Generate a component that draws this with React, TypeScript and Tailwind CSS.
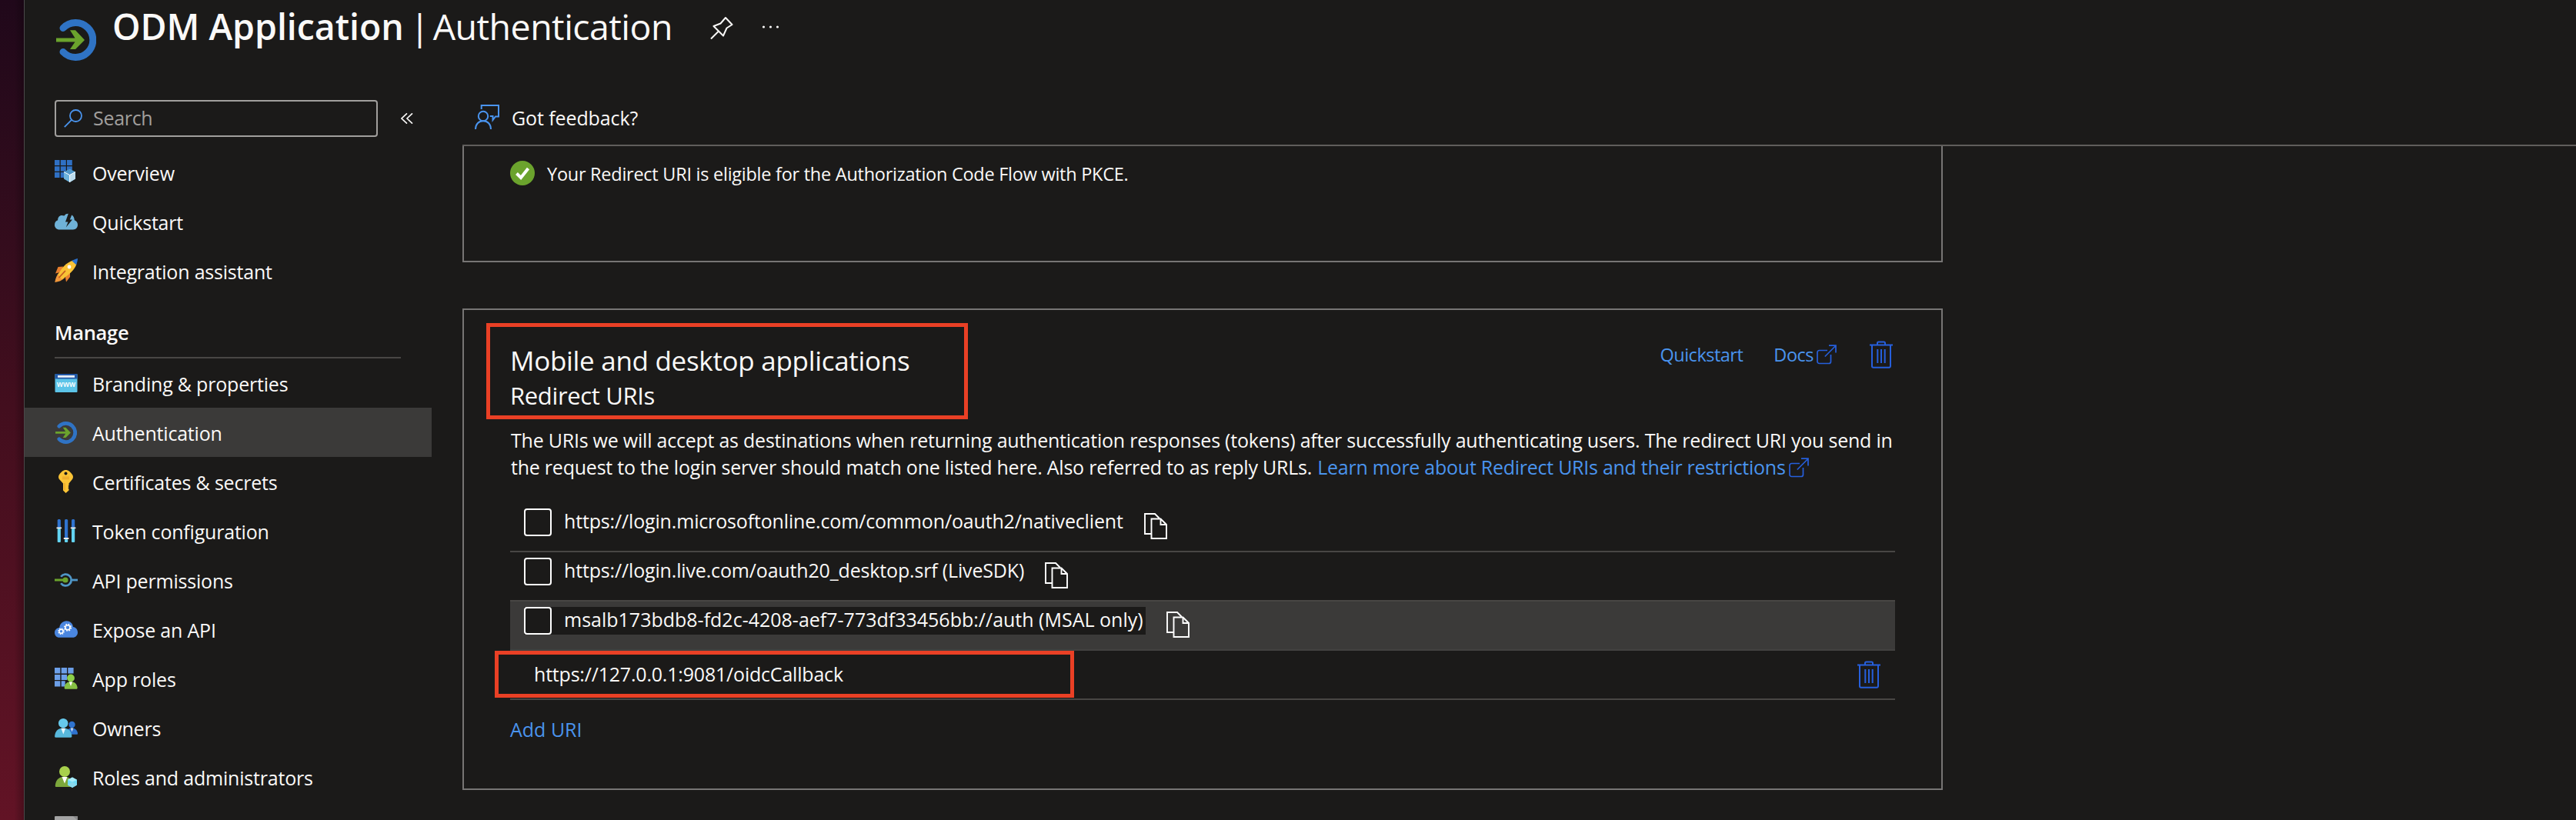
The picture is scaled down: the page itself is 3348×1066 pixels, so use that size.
import React from 'react';

type IconProps = { className?: string };

const SignInIcon = ({ className }: IconProps) => (
  <svg viewBox="0 0 52 54" className={className} fill="none">
    <path d="M9 11.5A22.5 22.5 0 1 1 9 42.5" stroke="#2f73c4" strokeWidth="9" strokeLinecap="round" />
    <path d="M0 24.4H24.5L18 14.2H25L37 27L25 39H18L24.5 29.4H0Z" fill="#6ba32d" />
  </svg>
);

const OverviewIcon = () => (
  <svg viewBox="0 0 30 34" className="h-[34px] w-[30px]">
    <g fill="#2f70c4">
      <path d="M0 1h6.5v7H0zM7.8 1h7v7h-7zM16 1h6.8v7H16zM0 9.3h6.500v6.500H0zM7.800 9.300h7v6.500h-7zM16 9.300h6.800v6.500H16zM0 17h6.500v7H0zM7.800 17h7v7h-7z" />
    </g>
    <path d="M19.600 13L27 16.500V25.500L19.600 30L12 25.500V16.500Z" fill="#6db3dc" />
    <path d="M19.600 13L27 16.500L19.600 20.500L12 16.500Z" fill="#4f97c8" />
    <path d="M27 16.500V25.500L19.600 30V20.500Z" fill="#bcdcee" />
    <path d="M12 16.500L19.600 20.500L27 16.500M19.600 20.500V30" stroke="#fff" strokeWidth="1" fill="none" />
  </svg>
);

const QuickstartIcon = () => (
  <svg viewBox="0 0 30 22" className="h-[22px] w-[30px]">
    <path d="M6.500 21.500C2.500 21.500 0 18.800 0 15.500C0 12 1.800 10 4.200 9.300C4 5.500 6.200 3 9.500 3C10.500 3 11.500 3.200 12.500 3.600C14 1.500 15.500 .8 17.800 .8L14 11.500H17.500L14.800 18.600L23 8.600H19.800L22.200 2.600C24.300 3.800 25.600 6 25.800 9.300C28.500 10.300 30 12.600 30 15.300C30 18.800 27.500 21.500 24 21.500Z" fill="#6fb2d8" />
  </svg>
);

const RocketIcon = () => (
  <svg viewBox="0 0 30 32" className="h-[32px] w-[30px]">
    <path d="M11 10.500L4.500 11L1 19.500L9 17.500ZM20 17L20 24L15 30.500L13.500 22.500Z" fill="#e87f2e" />
    <path d="M6 18C3 21 1 26 .3 31C5 30.500 10 28.500 13.500 25Z" fill="#f0963a" />
    <path d="M24 2.500L28.500 7C26.500 14 19 21.500 9.500 27L4.500 21.500C9 12 15 5.500 24 2.500Z" fill="#f9c235" />
    <path d="M30 0C29.800 3 29.200 5.500 28 8.300L22.300 3C25 1.500 27.500 .5 30 0Z" fill="#2c72cf" />
    <path d="M13.500 16.500L6 24.500" stroke="#c55a1f" strokeWidth="1.800" strokeLinecap="round" />
    <circle cx="19" cy="11" r="2.400" fill="#fff" />
  </svg>
);

const BrandingIcon = () => (
  <svg viewBox="0 0 30 24" className="h-[24px] w-[30px]">
    <rect x=".5" width="29" height="24" rx="1" fill="#5cc4e8" />
    <path d="M.5 1a1 1 0 0 1 1-1h27a1 1 0 0 1 1 1V6.500H.5Z" fill="#2358a6" />
    <rect x="4" y="2" width="22" height="2.800" fill="#e8eef7" />
    <text x="15" y="17" textAnchor="middle" fontSize="10" fontWeight="600" fill="#fff" fontFamily="Open Sans, sans-serif">www</text>
  </svg>
);

const KeyIcon = () => (
  <svg viewBox="0 0 30 30" className="h-[30px] w-[30px]">
    <path d="M14.500 0C18 0 20.500 2.500 23.300 6.500C24.300 8 24.200 10.500 23 12L18.500 17.500V20L17.500 21L18.500 22L17.500 23.500L18.500 24.800V26.500L14.500 30L11 26.500V17.500L6 12C4.800 10.500 4.800 8 5.700 6.500C8.500 2.500 11 0 14.500 0Z" fill="#fbc436" />
    <circle cx="14.500" cy="4.500" r="2" fill="#1b1a19" />
    <path d="M10 9.200H19M10 11.500H19" stroke="#e69a25" strokeWidth="1.100" />
    <path d="M13 17V26" stroke="#e69a25" strokeWidth="1" />
  </svg>
);

const TokenIcon = () => (
  <svg viewBox="0 0 30 30" className="h-[30px] w-[30px]">
    <g fill="#2f73cf">
      <rect x="3.700" width="4.200" height="12" rx="1.500" />
      <rect x="13" width="4.200" height="26" rx="1.500" />
      <rect x="22" width="4.200" height="12" rx="1.500" />
    </g>
    <g fill="#63d4f2">
      <rect x="3.700" y="12" width="4.200" height="18" rx="1" />
      <rect x="13" y="26" width="4.200" height="4" rx="1" />
      <rect x="22" y="12" width="4.200" height="18" rx="1" />
    </g>
    <path d="M2.500 11.300h6.600M11.800 25h6.600M20.800 11.300h6.600" stroke="#f0f0f0" strokeWidth="1.800" />
  </svg>
);

const PermissionsIcon = () => (
  <svg viewBox="0 0 30 18" className="h-[18px] w-[30px]" fill="none">
    <path d="M8.200 4.800A7.400 7.400 0 1 1 8.200 13.200" stroke="#4f96c6" strokeWidth="2.800" />
    <path d="M22 9H30" stroke="#4f96c6" strokeWidth="2.800" />
    <path d="M0 9H13" stroke="#6ba32d" strokeWidth="3" />
    <circle cx="14" cy="9" r="3.600" fill="#6ba32d" />
  </svg>
);

const ExposeIcon = () => (
  <svg viewBox="0 0 30 22" className="h-[22px] w-[30px]">
    <path d="M6 21.800C2.500 21.800 0 19 0 15.500C0 12 2.500 9.500 6.200 9C6.800 4 10.500 .3 15.500 .3C20 .3 23.500 3.500 24 8C27.500 8.500 30 11.300 30 15C30 18.800 27.300 21.800 23.500 21.800Z" fill="#4a86df" />
    <g fill="none" stroke="#fff">
      <circle cx="17" cy="8.700" r="3" strokeWidth="1.600" />
      <circle cx="17" cy="8.700" r="4.300" strokeWidth="1.600" strokeDasharray="1.800 1.580" />
      <circle cx="8.500" cy="13.800" r="2.500" strokeWidth="1.400" />
      <circle cx="8.500" cy="13.800" r="3.600" strokeWidth="1.400" strokeDasharray="1.500 1.330" />
    </g>
  </svg>
);

const AppRolesIcon = () => (
  <svg viewBox="0 0 30 28" className="h-[28px] w-[30px]">
    <path d="M0 0h7.300v7.500H0zM8.700 0h7.300v7.500H8.700zM17.300 0h7.300v7.500H17.300zM0 8.900h7.300v7H0zM8.700 8.900h7.300v7H8.700zM0 17.300h7.300v7.200H0zM8.700 17.300h5v7.200h-5z" fill="#6c9fe8" />
    <circle cx="21" cy="13.500" r="4.900" fill="#8dd04a" />
    <path d="M14.500 27.800C13 27.800 12.500 27 12.700 25.500C13.300 21 16 18.200 21 18.200C26 18.200 29 21 29.600 25.500C29.800 27 29.200 27.800 28 27.800Z" fill="#86c144" />
    <path d="M18.800 18.500L21 24L23.200 18.500Z" fill="#fff" />
  </svg>
);

const OwnersIcon = () => (
  <svg viewBox="0 0 30 25" className="h-[25px] w-[30px]">
    <circle cx="22.500" cy="8" r="4.200" fill="#2f73cf" />
    <path d="M15 20.800C15.500 15 18 12.500 22.500 12.500C27 12.500 29.500 15.500 30 19.500C30 20.500 29.600 20.800 28.800 20.800Z" fill="#2f73cf" />
    <path d="M20.600 12.600L22.500 17.500L24.400 12.600Z" fill="#cfe0f5" />
    <circle cx="11.200" cy="6.200" r="6.200" fill="#66c9ec" />
    <path d="M1.500 24.800C.3 24.800 0 24 .1 22.800C.8 16.500 4.500 12.500 11.200 12.500C18 12.500 21.700 16.500 22.400 22.800C22.500 24 22 24.800 21 24.800Z" fill="#58b8dc" />
    <path d="M8.300 12.700L11.300 20.500L14.200 12.700Z" fill="#e8f6fc" />
  </svg>
);

const RolesIcon = () => (
  <svg viewBox="0 0 30 28" className="h-[28px] w-[30px]">
    <circle cx="13" cy="7" r="7" fill="#a8d14c" />
    <path d="M2.500 27C1 27 .7 26.200 .8 25C1.500 18 5.500 13.800 12.500 13.800C19.500 13.800 23.500 18 24 25L23 27Z" fill="#7da83c" />
    <path d="M9.500 14L13 22.500L16.500 14Z" fill="#fff" />
    <path d="M23 14.500L29 17.800V24.500L23 28L17 24.500V17.800Z" fill="#6fdcf8" />
    <path d="M23 14.500L29 17.800L23 20.500L17 17.800Z" fill="#a9eefc" />
    <path d="M17 24.500L23 20.500L29 24.500L23 28Z" fill="#8ad9ee" />
  </svg>
);

const ManifestIcon = () => (
  <svg viewBox="0 0 30 26" className="h-[26px] w-[30px]">
    <rect width="30" height="26" rx="1" fill="#a3a3a3" />
    <path d="M24 0H29a1 1 0 0 1 1 1V6Z" fill="#8a8a8a" />
  </svg>
);

const ExternalIcon = () => (
  <svg viewBox="0 0 26 26" className="h-[26px] w-[26px] shrink-0" fill="none" stroke="#265fdc" strokeWidth="1.700">
    <path d="M14 7.500H3.500a2.500 2.500 0 0 0-2.500 2.500V22a2.500 2.500 0 0 0 2.500 2.500H16a2.500 2.500 0 0 0 2.500-2.500V13" />
    <path d="M10.800 15.500L24.800 1.500M16 1.200H25V10.500" />
  </svg>
);

const TrashIcon = () => (
  <svg viewBox="0 0 30 36" className="h-[36px] w-[30px] shrink-0" fill="none" stroke="#265fdc" strokeWidth="2">
    <path d="M0 5.600H30M10 5.600V3a1.500 1.500 0 0 1 1.500-1.500h7A1.500 1.500 0 0 1 20 3V5.600" />
    <path d="M3 5.600V33a1.800 1.800 0 0 0 1.800 1.800H25.200A1.800 1.800 0 0 0 27 33V5.600" />
    <path d="M10.300 11V29M15 11V29M19.700 11V29" />
  </svg>
);

const CopyIcon = () => (
  <svg viewBox="0 0 30 34" className="h-[34px] w-[30px] shrink-0" fill="none" stroke="#fff" strokeWidth="1.900">
    <path d="M9 27H1V1H14L20 7" />
    <path d="M9.500 7.500H21.500L29 15V33H9.500ZM21.500 7.500V15H29" />
  </svg>
);

const NavItem = ({ icon, label, active }: { icon: React.ReactNode; label: string; active?: boolean }) => (
  <div className={`flex h-16 shrink-0 items-center pl-10 ${active ? 'bg-[#3b3a39]' : ''}`}>
    <span className="flex w-[30px] justify-center">{icon}</span>
    <span className="ml-[19px] pt-[3px] tracking-[-0.2px]">{label}</span>
  </div>
);

const manage = [
  { label: 'Branding & properties', icon: <BrandingIcon /> },
  { label: 'Authentication', icon: <SignInIcon className="h-[29px] w-[28px]" />, active: true },
  { label: 'Certificates & secrets', icon: <KeyIcon /> },
  { label: 'Token configuration', icon: <TokenIcon /> },
  { label: 'API permissions', icon: <PermissionsIcon /> },
  { label: 'Expose an API', icon: <ExposeIcon /> },
  { label: 'App roles', icon: <AppRolesIcon /> },
  { label: 'Owners', icon: <OwnersIcon /> },
  { label: 'Roles and administrators', icon: <RolesIcon /> },
  { label: 'Manifest', icon: <ManifestIcon /> },
];

const Checkbox = () => <span className="h-9 w-9 shrink-0 rounded-[4px] border-2 border-white bg-[#1b1a19]" />;

export default function App() {
  return (
    <div className="flex h-[1066px] w-[3348px] overflow-hidden bg-[#1b1a19] font-['Open_Sans','Noto_Sans',sans-serif] text-[25px] whitespace-nowrap text-[#faf9f8]">
      <div className="w-[31px] shrink-0 bg-linear-to-b from-[#20081a] via-[#430e1e] to-[#621325]">
        <div className="h-full w-full bg-linear-to-r from-transparent from-60% to-black/25" />
      </div>

      <div className="relative flex min-w-0 flex-1 flex-col">
        <header className="flex h-[130px] shrink-0 items-start">
          <SignInIcon className="mt-[25px] ml-[42px] h-[54px] w-[52px]" />
          <h1 className="ml-[21px] flex text-[46.5px] leading-[68px]">
            <span className="font-semibold tracking-[-0.05px]">ODM Application</span>
            <span className="mr-[6px] ml-[8px] w-[24px] text-center">|</span>
            <span className="tracking-[-0.55px]">Authentication</span>
          </h1>
          <svg viewBox="0 0 30 30" className="mt-[21px] ml-[49px] h-[30px] w-[30px]" fill="none" stroke="#faf9f8" strokeWidth="2" strokeLinejoin="round">
            <path d="M20 2L28.500 11L21.500 15.500L17 25.500L4.500 13L13.500 9.500ZM11 19.500L1 29.500" />
          </svg>
          <svg viewBox="0 0 24 4" className="mt-[33px] ml-[37px] h-[4px] w-6" fill="#faf9f8">
            <circle cx="2.500" cy="2" r="1.600" />
            <circle cx="11.500" cy="2" r="1.600" />
            <circle cx="20.500" cy="2" r="1.600" />
          </svg>
        </header>

        <div className="flex min-h-0 flex-1">
          <nav className="flex w-[530px] shrink-0 flex-col">
            <div className="flex shrink-0 items-center pl-10">
              <div className="flex h-12 w-[420px] items-center rounded-[4px] border-2 border-[#a19f9d] pl-[10px]">
                <svg viewBox="0 0 24 24" className="h-6 w-6" fill="none" stroke="#4a94ee" strokeWidth="1.800">
                  <circle cx="15.500" cy="8.500" r="7.500" />
                  <path d="M10 13.800L.8 23.200" />
                </svg>
                <span className="ml-[14px] tracking-[-0.3px] text-[#a19f9d]">Search</span>
              </div>
              <svg viewBox="0 0 16 14" className="ml-[30px] h-[14px] w-4" fill="none" stroke="#faf9f8" strokeWidth="1.600">
                <path d="M8 .3L1 7L8 13.700M15 .3L8 7L15 13.700" />
              </svg>
            </div>

            <div className="mt-[14px] flex flex-col">
              <NavItem icon={<OverviewIcon />} label="Overview" />
              <NavItem icon={<QuickstartIcon />} label="Quickstart" />
              <NavItem icon={<RocketIcon />} label="Integration assistant" />
            </div>

            <div className="mr-10 ml-10 h-[82px] shrink-0 border-b-2 border-[#484644] pt-8 text-[25.5px] leading-8 font-semibold tracking-[-0.3px]">Manage</div>

            {manage.map((item) => (
              <NavItem key={item.label} {...item} />
            ))}
          </nav>

          <main className="ml-10 flex min-w-0 flex-1 flex-col">
            <div className="flex h-[58px] shrink-0 items-start pl-4">
              <svg viewBox="0 0 32 32" className="mt-[6px] h-8 w-8" fill="none" stroke="#4a94ee" strokeWidth="2">
                <path d="M8.700 6V1H31V15.500H27L23.500 20V15H19.800" />
                <circle cx="11" cy="15" r="6.200" />
                <path d="M1 32C1 25.500 5 21.300 11 21.300C17 21.300 21 25.500 21 32" />
              </svg>
              <span className="ml-[16px] leading-[47px] tracking-[-0.1px]">Got feedback?</span>
            </div>

            <div className="flex flex-col border-t-2 border-[#605e5c]">
              <section className="h-[151px] w-[1924px] border-2 border-t-0 border-[#777574] pt-[19px] pl-[60px]">
                <div className="flex h-8 items-center text-[23.5px] tracking-[-0.26px]">
                  <svg viewBox="0 0 32 32" className="h-8 w-8">
                    <circle cx="16" cy="16" r="16" fill="#6ba32d" />
                    <path d="M8.500 16.500L14 22L23.500 10" fill="none" stroke="#fff" strokeWidth="4" />
                  </svg>
                  <span className="ml-4 pt-[3px]">Your Redirect URI is eligible for the Authorization Code Flow with PKCE.</span>
                </div>
              </section>

              <section className="relative mt-[60px] h-[626px] w-[1924px] border-2 border-[#777574] px-[60px] pt-[43px]">
                <div className="flex items-start justify-between">
                  <div>
                    <h2 className="text-[35px] leading-[46px] tracking-[-0.3px]">Mobile and desktop applications</h2>
                    <h3 className="text-[31px] leading-[45px] tracking-[-0.35px]">Redirect URIs</h3>
                  </div>
                  <div className="mt-[-3px] mr-[3px] flex items-center text-[23.5px] leading-8 text-[#4a94ee]">
                    <span className="tracking-[-0.5px]">Quickstart</span>
                    <span className="mr-[4px] ml-[40px] tracking-[-0.5px]">Docs</span>
                    <ExternalIcon />
                    <span className="ml-[43px]"><TrashIcon /></span>
                  </div>
                </div>

                <p className="mt-[18px] ml-px leading-[35px] tracking-[-0.23px]">
                  The URIs we will accept as destinations when returning authentication responses (tokens) after successfully authenticating users. The redirect URI you send in
                  <br />
                  <span className="flex h-[35px] items-center">
                    the request to the login server should match one listed here. Also referred to as reply URLs.&nbsp;
                    <span className="mr-1 ml-px tracking-[-0.26px] text-[#4a94ee]">Learn more about Redirect URIs and their restrictions</span>
                    <ExternalIcon />
                  </span>
                </p>

                <div className="mt-[29px] flex flex-col">
                  <div className="flex h-16 items-start border-b-2 border-[#484644] pt-[7px] pl-[18px]">
                    <Checkbox />
                    <span className="pl-[16px] leading-[33px] tracking-[-0.16px]">https://login.microsoftonline.com/common/oauth2/nativeclient</span>
                    <span className="mt-[6px] ml-[27px]"><CopyIcon /></span>
                  </div>
                  <div className="flex h-16 items-start border-b-2 border-[#484644] pt-[7px] pl-[18px]">
                    <Checkbox />
                    <span className="pl-[16px] leading-[33px] tracking-[-0.16px]">https://login.live.com/oauth20_desktop.srf (LiveSDK)</span>
                    <span className="mt-[6px] ml-[27px]"><CopyIcon /></span>
                  </div>
                  <div className="flex h-16 items-start border-b-2 border-[#424140] bg-[#3b3a39] pt-[7px] pl-[18px]">
                    <span className="flex h-9 items-start bg-[#1b1a19] pr-[3px]">
                      <Checkbox />
                      <span className="pl-[16px] leading-[33px]">msalb173bdb8-fd2c-4208-aef7-773df33456bb://auth (MSAL only)</span>
                    </span>
                    <span className="mt-[6px] ml-[27px]"><CopyIcon /></span>
                  </div>
                  <div className="flex h-16 items-center justify-between border-b-2 border-[#484644] pr-[19px] pl-[31px]">
                    <span className="tracking-[-0.2px]">https://127.0.0.1:9081/oidcCallback</span>
                    <span className="mb-px leading-none"><TrashIcon /></span>
                  </div>
                </div>
                <div className="mt-[22px] leading-8 text-[#4a94ee]">Add URI</div>

                <div className="absolute top-[17px] left-[29px] h-[125px] w-[626px] border-5 border-[#ea4025]" />
                <div className="absolute top-[443px] left-[40px] h-[61px] w-[753px] border-5 border-[#ea4025]" />
              </section>
            </div>
          </main>
        </div>
        <div className="absolute inset-y-0 left-0 w-px bg-[#4a4849]" />
      </div>
    </div>
  );
}
